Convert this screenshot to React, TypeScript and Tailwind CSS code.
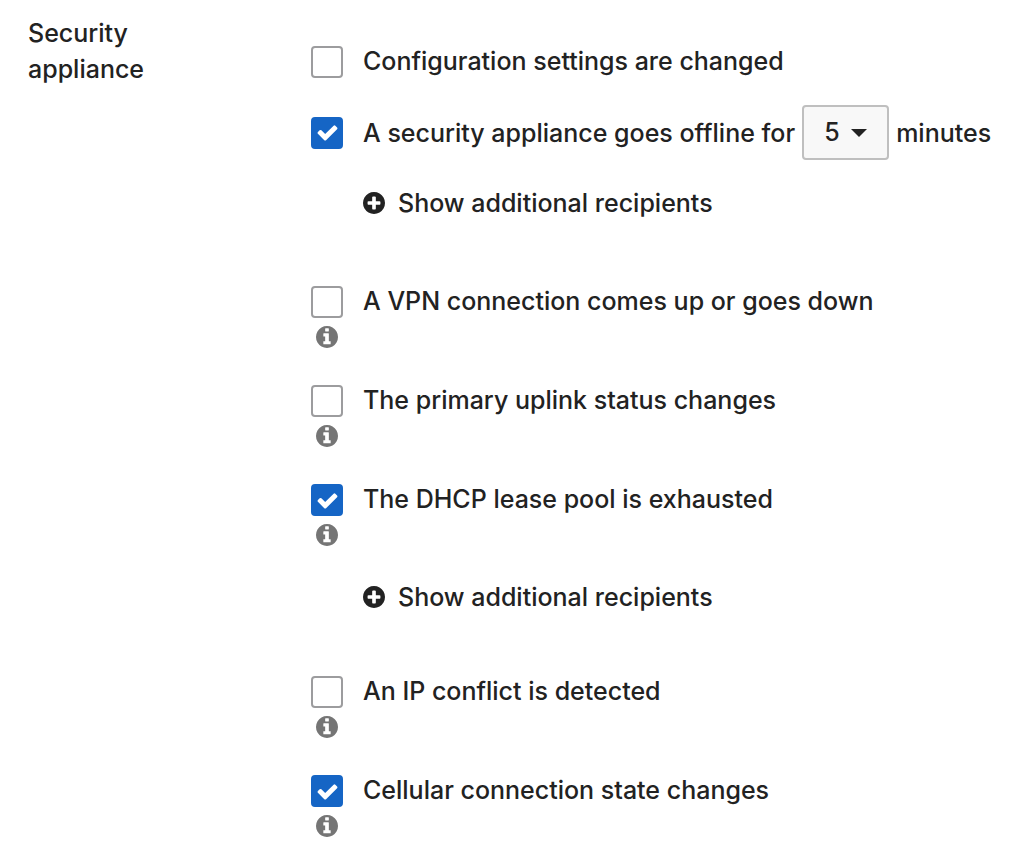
import { useState } from "react";

type Alert = {
  id: string;
  label: string;
  checked?: boolean;
  info?: boolean;
  minutes?: boolean;
};

const alerts: Alert[] = [
  { id: "settings", label: "Configuration settings are changed" },
  {
    id: "offline",
    label: "A security appliance goes offline for",
    checked: true,
    minutes: true,
  },
  { id: "vpn", label: "A VPN connection comes up or goes down", info: true },
  { id: "uplink", label: "The primary uplink status changes", info: true },
  {
    id: "dhcp",
    label: "The DHCP lease pool is exhausted",
    checked: true,
    info: true,
  },
  { id: "conflict", label: "An IP conflict is detected", info: true },
  {
    id: "cellular",
    label: "Cellular connection state changes",
    checked: true,
    info: true,
  },
];

function CheckIcon() {
  return (
    <svg
      viewBox="0 0 1792 1792"
      className="pointer-events-none col-start-1 row-start-1 hidden size-[23px] fill-white peer-checked:block"
      aria-hidden="true"
    >
      <path d="M1671 566q0 40-28 68l-724 724-136 136q-28 28-68 28t-68-28l-136-136-362-362q-28-28-28-68t28-68l136-136q28-28 68-28t68 28l294 295 656-657q28-28 68-28t68 28l136 136q28 28 28 68z" />
    </svg>
  );
}

function InfoIcon() {
  return (
    <svg
      viewBox="128 128 1536 1536"
      className="size-[22px] fill-[#757575]"
      aria-hidden="true"
    >
      <path d="M1152 1376v-160q0-14-9-23t-23-9h-96v-512q0-14-9-23t-23-9h-320q-14 0-23 9t-9 23v160q0 14 9 23t23 9h96v320h-96q-14 0-23 9t-9 23v160q0 14 9 23t23 9h448q14 0 23-9t9-23zm-128-896v-160q0-14-9-23t-23-9h-192q-14 0-23 9t-9 23v160q0 14 9 23t23 9h192q14 0 23-9t9-23zm640 416q0 209-103 385.5t-279.5 279.5-385.5 103-385.5-103-279.5-279.5-103-385.5 103-385.5 279.5-279.5 385.5-103 385.5 103 279.5 279.5 103 385.5z" />
    </svg>
  );
}

function PlusIcon() {
  return (
    <svg
      viewBox="128 128 1536 1536"
      className="size-[22px] fill-[#222]"
      aria-hidden="true"
    >
      <path d="M1344 960v-128q0-26-19-45t-45-19h-256v-256q0-26-19-45t-45-19h-128q-26 0-45 19t-19 45v256h-256q-26 0-45 19t-19 45v128q0 26 19 45t45 19h256v256q0 26 19 45t45 19h128q26 0 45-19t19-45v-256h256q26 0 45-19t19-45zm320-64q0 209-103 385.5t-279.5 279.5-385.5 103-385.5-103-279.5-279.5-103-385.5 103-385.5 279.5-279.5 385.5-103 385.5 103 279.5 279.5 103 385.5z" />
    </svg>
  );
}

function MinutesSelect() {
  return (
    <>
      <span className="grid items-center">
        <select
          aria-label="Minutes offline"
          defaultValue="5"
          className="col-start-1 row-start-1 h-[55px] w-[87px] appearance-none rounded-[4px] border-2 border-[#bfbfbf] bg-[#f8f8f8] pb-0.5 pl-5"
        >
          <option>5</option>
          <option>10</option>
          <option>15</option>
          <option>30</option>
          <option>60</option>
        </select>
        <svg
          viewBox="0 0 16 8"
          className="pointer-events-none col-start-1 row-start-1 mr-[22px] h-2 w-4 justify-self-end fill-[#222]"
          aria-hidden="true"
        >
          <path d="M0 0h16L8 8z" />
        </svg>
      </span>
      <span>minutes</span>
    </>
  );
}

function AlertRow({ alert }: { alert: Alert }) {
  const [checked, setChecked] = useState(Boolean(alert.checked));
  const expandable = alert.id === "offline" || alert.id === "dhcp";

  return (
    <li>
      <div
        className={
          alert.minutes
            ? "flex items-center gap-5"
            : alert.info
              ? "flex items-start gap-5 pb-2"
              : "flex h-9 items-start gap-5"
        }
      >
        <div
          className={
            alert.minutes
              ? "flex w-8 shrink-0 flex-col items-center"
              : "flex w-8 shrink-0 flex-col items-center gap-2 pt-[3px]"
          }
        >
          <span className="grid place-items-center">
            <input
              id={alert.id}
              type="checkbox"
              checked={checked}
              onChange={(e) => setChecked(e.target.checked)}
              className="peer col-start-1 row-start-1 size-8 appearance-none rounded-[4px] border-2 border-[#9c9c9e] bg-white checked:border-[#1565c5] checked:bg-[#1565c5]"
            />
            <CheckIcon />
          </span>
          {alert.info && (
            <button type="button" aria-label="More information">
              <InfoIcon />
            </button>
          )}
        </div>
        <div
          className={
            alert.minutes
              ? "flex items-center gap-[7px] whitespace-nowrap"
              : "flex items-center"
          }
        >
          <label htmlFor={alert.id}>{alert.label}</label>
          {alert.minutes && <MinutesSelect />}
        </div>
      </div>
      {expandable && checked && (
        <button
          type="button"
          className={
            alert.info
              ? "mt-[25px] mb-8 ml-[52px] flex items-center gap-[13px]"
              : "mt-[25px] mb-9 ml-[52px] flex items-center gap-[13px]"
          }
        >
          <PlusIcon />
          Show additional recipients
        </button>
      )}
    </li>
  );
}

export default function App() {
  return (
    <main className="flex bg-white pt-[15px] pb-3 pl-7 font-['Inter',sans-serif] text-[25px] leading-9 font-medium text-[#222]">
      <h2 className="w-[283px] shrink-0 pr-32">Security appliance</h2>
      <ul className="flex grow flex-col gap-[26px] pt-7">
        {alerts.map((alert) => (
          <AlertRow key={alert.id} alert={alert} />
        ))}
      </ul>
    </main>
  );
}
